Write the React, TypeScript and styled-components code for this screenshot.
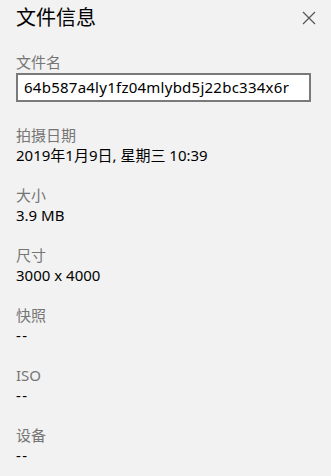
import React from 'react';
import styled, { createGlobalStyle } from 'styled-components';

const GlobalStyle = createGlobalStyle`
    html, body {
        margin: 0;
        padding: 0;
        background: #f2f2f2;
    }
    body {
        font-family: 'Segoe UI', 'Noto Sans', 'Noto Sans CJK SC', sans-serif;
    }
`;

const Panel = styled.div`
    width: 331px;
    height: 476px;
    box-sizing: border-box;
    background: #f2f2f2;
    padding: 4px 16px 0 16px;
    overflow: hidden;
`;

const Header = styled.div`
    display: flex;
    justify-content: space-between;
    align-items: center;
    height: 28px;
`;

const Title = styled.h1`
    margin: 0;
    font-size: 20px;
    font-weight: 400;
    color: #000;
    line-height: 28px;
`;

const CloseButton = styled.button`
    display: flex;
    align-items: center;
    justify-content: center;
    width: 24px;
    height: 24px;
    margin-right: -6px;
    padding: 0;
    border: none;
    background: transparent;
    cursor: pointer;
`;

const Field = styled.div<{ $top: number }>`
    display: flex;
    flex-direction: column;
    margin-top: ${(p) => p.$top}px;
`;

const Label = styled.div`
    font-size: 15px;
    line-height: 20px;
    color: #767676;
`;

const Value = styled.div<{ $dash?: boolean }>`
    font-size: 15px;
    line-height: 20px;
    color: #000;
    letter-spacing: ${(p) => (p.$dash ? '1.5px' : 'normal')};
`;

const NameBox = styled.div`
    margin-top: 1px;
    width: 295px;
    height: 29px;
    box-sizing: border-box;
    border: 2px solid #7a7a7a;
    background: #fff;
    padding: 0 0 0 6px;
    font-size: 15px;
    line-height: 25px;
    letter-spacing: 0.25px;
    color: #000;
    white-space: nowrap;
    overflow: hidden;
`;

const details = [
    { label: '拍摄日期', value: '2019年1月9日, 星期三 10:39' },
    { label: '大小', value: '3.9 MB' },
    { label: '尺寸', value: '3000 x 4000' },
    { label: '快照', value: '--' },
    { label: 'ISO', value: '--' },
    { label: '设备', value: '--' },
];

export default function App() {
    return (
        <>
            <GlobalStyle />
            <Panel>
                <Header>
                    <Title>文件信息</Title>
                    <CloseButton aria-label="关闭">
                        <svg width="14" height="14" viewBox="0 0 14 14">
                            <path d="M1 1 L13 13 M13 1 L1 13" stroke="#555" strokeWidth="1.2" fill="none" />
                        </svg>
                    </CloseButton>
                </Header>
                <Field $top={20}>
                    <Label>文件名</Label>
                    <NameBox>64b587a4ly1fz04mlybd5j22bc334x6r</NameBox>
                </Field>
                {details.map((d, i) => (
                    <Field key={d.label} $top={i === 0 ? 23 : 20}>
                        <Label>{d.label}</Label>
                        <Value $dash={d.value === '--'}>{d.value}</Value>
                    </Field>
                ))}
            </Panel>
        </>
    );
}
